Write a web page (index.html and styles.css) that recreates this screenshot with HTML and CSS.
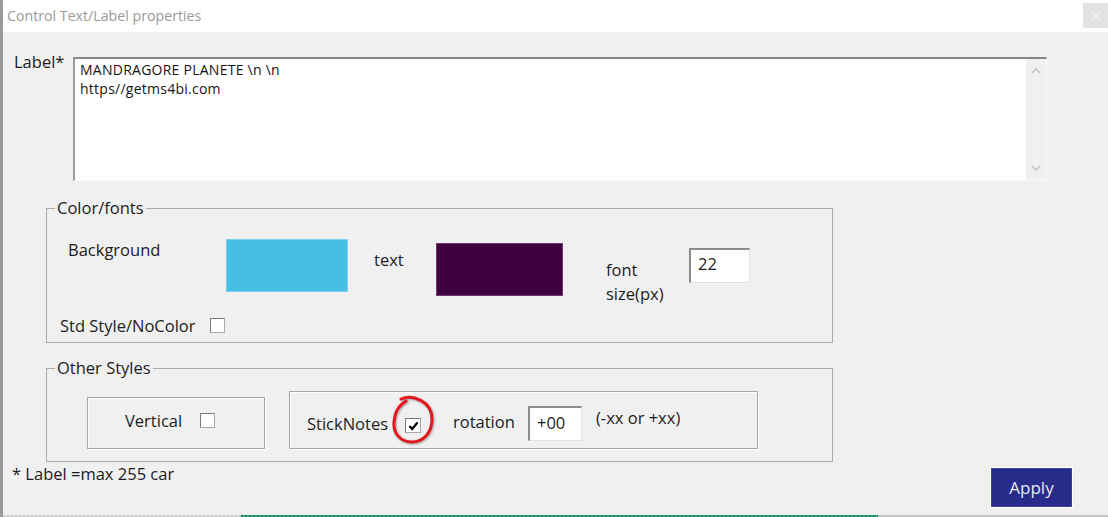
FILE: index.html
```html
<!DOCTYPE html>
<html>
<head>
<meta charset="utf-8">
<link rel="stylesheet" href="styles.css">
</head>
<body>
<div class="window">
  <div class="titlebar">
    <span class="title">Control Text/Label properties</span>
    <span class="close"><svg width="8" height="8" viewBox="0 0 8 8"><path d="M0.5 0.5 L7.5 7.5 M7.5 0.5 L0.5 7.5" stroke="#f7f7f7" stroke-width="1.4"/></svg></span>
  </div>
  <div class="content">
    <div class="label-row">
      <span class="lbl">Label*</span>
      <div class="textarea">
        <div class="ta-text">MANDRAGORE PLANETE \n \n<br>https//getms4bi.com</div>
        <div class="scrollbar">
          <svg class="chev" width="10" height="6" viewBox="0 0 10 6"><path d="M1 5 L5 1 L9 5" fill="none" stroke="#c4c4c4" stroke-width="1.6"/></svg>
          <svg class="chev" width="10" height="6" viewBox="0 0 10 6"><path d="M1 1 L5 5 L9 1" fill="none" stroke="#c4c4c4" stroke-width="1.6"/></svg>
        </div>
      </div>
    </div>

    <fieldset class="group group-color">
      <legend>Color/fonts</legend>
      <div class="color-row">
        <span class="bg-lbl">Background</span>
        <span class="swatch swatch-bg"></span>
        <span class="text-lbl">text</span>
        <span class="swatch swatch-fg"></span>
        <span class="fs-lbl">font<br>size(px)</span>
        <span class="input input-fs">22</span>
      </div>
      <div class="std-row">
        <span class="std-lbl">Std Style/NoColor</span>
        <span class="cb cb-std"></span>
      </div>
    </fieldset>

    <fieldset class="group group-other">
      <legend>Other Styles</legend>
      <div class="other-row">
        <div class="box box-vert">
          <span class="vert-lbl">Vertical</span>
          <span class="cb cb-vert"></span>
        </div>
        <div class="box box-stick">
          <span class="stick-lbl">StickNotes</span>
          <span class="cb cb-stick"><svg width="11" height="10" viewBox="0 0 11 10"><path d="M1.5 5 L4.2 8 L9.5 1.5" fill="none" stroke="#000" stroke-width="2.2"/></svg></span>
          <span class="rot-lbl">rotation</span>
          <span class="input input-rot">+00</span>
          <span class="hint">(-xx or +xx)</span>
          <svg class="redcircle" width="46" height="50" viewBox="0 0 46 50"><path d="M11 4 C 22 -1, 42 6, 42 24 C 42 38, 33 47, 22 47 C 10 47, 3 38, 4 27 C 5 17, 8 11, 16 6" fill="none" stroke="#e3161d" stroke-width="3" stroke-linecap="round"/></svg>
        </div>
      </div>
    </fieldset>

    <div class="footer">
      <span class="note">* Label =max 255 car</span>
      <span class="apply">Apply</span>
    </div>
  </div>
  <div class="strip">
    <span class="strip-a"></span>
    <span class="strip-b"></span>
    <span class="strip-c"></span>
  </div>
</div>
</body>
</html>
```
FILE: styles.css
```css
* { box-sizing: border-box; }
html, body { margin: 0; padding: 0; }
body {
  font-family: "Open Sans", "Noto Sans", sans-serif;
  color: #1c1c1c;
  background: #f0f0f0;
}
.window {
  width: 1108px;
  height: 517px;
  border-left: 3px solid #9a9a9a;
  display: flex;
  flex-direction: column;
  overflow: hidden;
}
.titlebar {
  height: 32px;
  background: #fff;
  display: flex;
  justify-content: space-between;
  align-items: flex-start;
  flex: none;
}
.title {
  font-size: 14.2px;
  line-height: 19px;
  color: #9a9a9a;
  margin: 6px 0 0 4px;
}
.close {
  width: 25px;
  height: 25px;
  margin-top: 3px;
  background: #e3e3e3;
  display: flex;
  align-items: center;
  justify-content: center;
}
.close svg { display: block; }
.content {
  height: 483px;
  background: #f0f0f0;
  flex: none;
}
.label-row {
  display: flex;
  align-items: flex-start;
  padding-top: 19px;
}
.lbl {
  font-size: 16.5px;
  line-height: 22px;
  width: 59px;
  margin-left: 11px;
}
.textarea {
  margin-top: 6px;
  width: 974px;
  height: 124px;
  background: #fff;
  border-top: 2px solid #858585;
  border-left: 2px solid #9c9c9c;
  border-right: 1px solid #fafafa;
  border-bottom: 1px solid #fafafa;
  display: flex;
  justify-content: space-between;
}
.ta-text {
  font-size: 14px;
  line-height: 19px;
  padding: 1px 0 0 5px;
  letter-spacing: 0.25px;
  color: #141414;
}
.scrollbar {
  width: 20px;
  background: #f0f0f0;
  display: flex;
  flex-direction: column;
  align-items: center;
  justify-content: space-between;
  padding: 9px 0 9px;
}
.chev { display: block; }

.group {
  margin: 0 0 0 43px;
  padding: 0;
  width: 787px;
  border: 1px solid #ababab;
  min-width: 0;
}
.group legend {
  font-size: 16.5px;
  line-height: 22px;
  padding: 0 2px;
  margin-left: 8px;
}
.group-color {
  margin-top: 16px;
  height: 146px;
}
.color-row {
  display: flex;
  align-items: flex-start;
  height: 76px;
  margin-top: 20px;
}
.bg-lbl {
  font-size: 16.5px;
  line-height: 22px;
  margin-left: 21px;
  width: 158px;
}
.swatch { display: block; }
.swatch-bg {
  width: 122px;
  height: 53px;
  background: #48bee4;
  border: 1px solid #7fd0ec;
}
.text-lbl {
  font-size: 16.5px;
  line-height: 22px;
  margin: 10px 0 0 26px;
  width: 62px;
}
.swatch-fg {
  width: 127px;
  height: 53px;
  margin-top: 4px;
  background: #400040;
  border: 1px solid #70386f;
}
.fs-lbl {
  font-size: 16.5px;
  line-height: 24px;
  margin: 19px 0 0 43px;
  width: 83px;
}
.input {
  display: block;
  background: #fff;
  border-top: 2px solid #8c8c8c;
  border-left: 2px solid #8c8c8c;
  border-right: 1px solid #e0e0e0;
  border-bottom: 1px solid #e0e0e0;
  font-size: 16.5px;
  line-height: 22px;
}
.input-fs {
  width: 61px;
  height: 35px;
  margin-top: 9px;
  padding: 3px 0 0 7px;
}
.std-row {
  display: flex;
  align-items: flex-start;
}
.std-lbl {
  font-size: 16.5px;
  line-height: 22px;
  margin-left: 13px;
  width: 150px;
}
.cb {
  display: flex;
  align-items: center;
  justify-content: center;
  width: 15px;
  height: 15px;
  background: #fff;
  border: 1px solid #a9a9a9;
  border-top-color: #7a7a7a;
  border-left-color: #7a7a7a;
}
.cb-std { margin-top: 3px; }

.group-other {
  margin-top: 14px;
  height: 105px;
}
.other-row {
  display: flex;
  align-items: flex-end;
  height: 70px;
}
.box {
  border: 1px solid #a6a6a6;
  box-shadow: inset 1px 1px 0 #fdfdfd, 1px 1px 0 #fdfdfd;
  display: flex;
  align-items: flex-start;
}
.box-vert {
  margin-left: 40px;
  width: 178px;
  height: 52px;
  padding: 12px 0 0 37px;
}
.vert-lbl {
  font-size: 16.5px;
  line-height: 22px;
  width: 75px;
}
.cb-vert { margin-top: 3px; }
.box-stick {
  position: relative;
  margin-left: 24px;
  width: 469px;
  height: 58px;
  padding: 0 0 0 17px;
}
.stick-lbl {
  font-size: 16.5px;
  line-height: 22px;
  width: 98px;
  margin-top: 21px;
}
.cb-stick {
  margin-top: 26px;
  width: 16px;
  height: 15px;
}
.cb-stick svg { display: block; }
.rot-lbl {
  font-size: 16.5px;
  line-height: 22px;
  width: 75px;
  margin: 19px 0 0 32px;
}
.input-rot {
  width: 54px;
  height: 35px;
  margin-top: 14px;
  padding: 4px 0 0 7px;
}
.hint {
  font-size: 16.5px;
  line-height: 22px;
  margin: 15px 0 0 14px;
}
.redcircle {
  position: absolute;
  left: 100px;
  top: 3px;
  filter: drop-shadow(1px 1.5px 1px rgba(0,0,0,0.35));
}

.footer {
  display: flex;
  justify-content: space-between;
  align-items: flex-start;
}
.note {
  font-size: 16.5px;
  line-height: 22px;
  margin: 1px 0 0 9px;
}
.apply {
  margin: 5px 35px 0 0;
  width: 83px;
  height: 41px;
  background: #272b8a;
  border: 1px solid #fff;
  box-shadow: inset 0 0 0 1px #3c42a8;
  color: #e8e8f6;
  font-size: 17px;
  display: flex;
  align-items: center;
  justify-content: center;
}

.strip {
  height: 2px;
  display: flex;
  flex: none;
}
.strip-a {
  width: 238px;
  background: repeating-linear-gradient(90deg, #c8c8c8 0 2px, #dcdcdc 2px 4px);
}
.strip-b {
  width: 637px;
  background: repeating-linear-gradient(90deg, #1c7f62 0 2px, #2fae88 2px 4px);
}
.strip-c {
  flex: 1;
  background: #c6c6c6;
}
```
